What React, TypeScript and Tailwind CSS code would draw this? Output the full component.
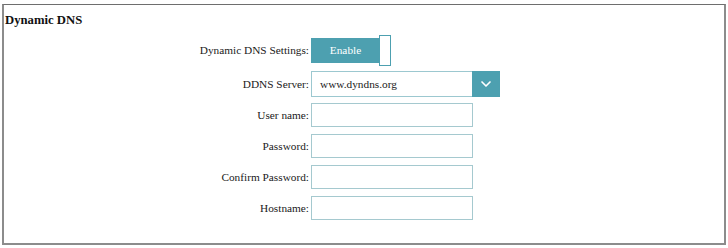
import { ChevronDown } from "lucide-react";

const fields = ["User name:", "Password:", "Confirm Password:", "Hostname:"];

const Label = ({ text }: { text: string }) => (
  <div className="w-[307px] text-right pr-[2px] text-[11.3px] text-[#1a1a1a]">{text}</div>
);

export default function App() {
  return (
    <div className="w-[728px] h-[248px] bg-white pt-[4px] pl-[2px] font-['Liberation_Serif',serif]">
      <div className="w-[724px] h-[241px] border-2 border-t border-[#8c8c8c] border-t-[#6e6e6e]">
        <div className="pl-[1px] pt-[8px] text-[12.7px] font-bold leading-[15px] text-[#111]">Dynamic DNS</div>

        <div className="mt-[7px] flex items-center h-[31px]">
          <Label text="Dynamic DNS Settings:" />
          <div className="flex items-center">
            <div className="w-[69px] h-[25px] bg-[#4da0b0] text-white text-[11.3px] flex items-center justify-center">
              Enable
            </div>
            <div className="w-[12px] h-[31px] -ml-[1px] bg-white border border-[#4da0b0]" />
          </div>
        </div>

        <div className="mt-[5px] flex items-center h-[26px]">
          <Label text="DDNS Server:" />
          <div className="w-[189px] h-[26px] flex border border-[#9cc8d0]">
            <div className="flex-1 flex items-center pl-[8px] text-[11.3px] text-[#1a1a1a]">www.dyndns.org</div>
            <div className="w-[28px] -my-[1px] -mr-[1px] bg-[#4da0b0] flex items-center justify-center">
              <ChevronDown size={16} strokeWidth={2.5} color="white" />
            </div>
          </div>
        </div>

        <div className="mt-[6px] flex flex-col gap-[7px]">
          {fields.map((f) => (
            <div key={f} className="flex items-center h-[24px]">
              <Label text={f} />
              <div className="w-[162px] h-[24px] border border-[#a5c9cf] bg-white" />
            </div>
          ))}
        </div>
      </div>
    </div>
  );
}
